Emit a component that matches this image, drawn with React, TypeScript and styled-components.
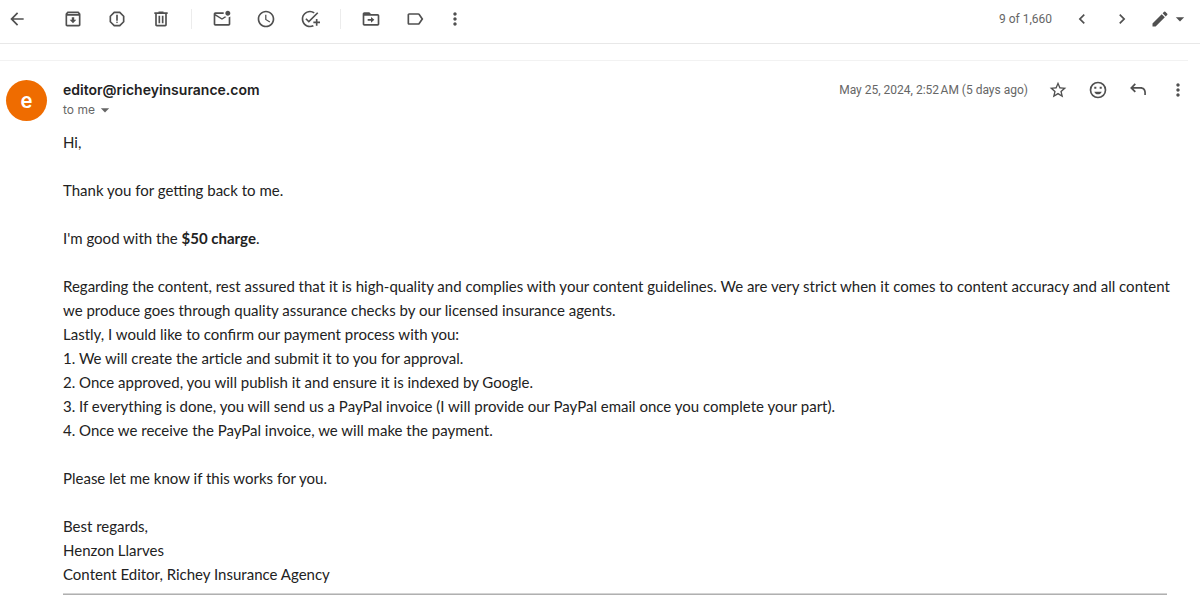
import React from 'react';
import styled, { createGlobalStyle, css } from 'styled-components';
import {
  MdAccessTime,
  MdArrowBack,
  MdArrowDropDown,
  MdChevronLeft,
  MdChevronRight,
  MdEdit,
  MdMoreVert,
  MdOutlineAddTask,
  MdOutlineArchive,
  MdOutlineLabel,
  MdOutlineReport,
  MdStarBorder,
} from 'react-icons/md';

const GlobalStyle = createGlobalStyle`
  * { box-sizing: border-box; }
  body {
    margin: 0;
    background: #fff;
    color: #222;
    font-family: Inter, "Liberation Sans", sans-serif;
  }
`;

const Toolbar = styled.header`
  display: flex;
  align-items: center;
  justify-content: space-between;
  height: 44px;
  padding: 0 2px 6px 0;
  border-bottom: 1px solid #e8e8e8;
`;

const ToolGroup = styled.div`
  display: flex;
  align-items: center;
`;

const IconButton = styled.button<{ $width?: number; $spaced?: boolean }>`
  display: flex;
  flex: none;
  align-items: center;
  justify-content: center;
  width: ${({ $width = 44 }) => $width}px;
  height: 32px;
  padding: 0;
  border: 0;
  background: none;
  color: #505050;
  cursor: pointer;
  ${({ $spaced }) => $spaced && css`margin-right: 17px;`}
`;

const Separator = styled.span`
  width: 1px;
  height: 20px;
  margin: 0 8px;
  background: #ececec;
`;

const Counter = styled.span`
  margin-right: 10px;
  color: #666;
  font: 12px/20px Roboto, sans-serif;
`;

const Message = styled.main`
  margin: 16px 12px 0 0;
  border-top: 1px solid #f2f2f2;
`;

const MessageHeader = styled.div`
  display: flex;
  align-items: flex-start;
  margin-right: -12px;
  padding: 19px 2px 0 6px;
`;

const Avatar = styled.div`
  display: flex;
  flex: none;
  align-items: center;
  justify-content: center;
  width: 41px;
  height: 41px;
  margin-right: 16px;
  border-radius: 50%;
  background: #ef6c00;
  color: #fff;
  font: 500 22px/22px Roboto, sans-serif;
`;

const Sender = styled.div`
  flex: 1;
`;

const SenderName = styled.h1`
  margin: 0;
  color: #222;
  font-size: 14px;
  font-weight: 600;
  line-height: 20px;
`;

const Recipient = styled.button`
  display: flex;
  align-items: center;
  padding: 0;
  border: 0;
  background: none;
  color: #666;
  font-family: inherit;
  font-size: 12px;
  line-height: 20px;
  cursor: pointer;
`;

const Meta = styled.div`
  display: flex;
  align-items: center;
  height: 20px;
`;

const SentDate = styled.time`
  margin-right: 10px;
  color: #666;
  font: 12px/20px Roboto, sans-serif;
`;

const Body = styled.article`
  padding: 9px 16px 0 63px;
  font-family: Lato, sans-serif;
  font-size: 15px;
  line-height: 24px;
`;

const Paragraph = styled.p<{ $tight?: boolean }>`
  margin: 0 0 ${({ $tight }) => ($tight ? 0 : 24)}px;
`;

const Rule = styled.hr`
  margin: 7px 5px 0 0;
  border: 0;
  border-top: 1px solid #d4d4d4;
  border-bottom: 1px solid #b0b0b0;
`;

const Glyph = ({ children }: { children: React.ReactNode }) => (
  <svg width="20" height="20" viewBox="0 0 24 24" fill="currentColor" aria-hidden="true">
    {children}
  </svg>
);

const TrashIcon = () => (
  <Glyph>
    <path d="M15 4V3H9v1H4v2h1v13c0 1.100.9 2 2 2h10c1.100 0 2-.9 2-2V6h1V4h-5zm2 15H7V6h10v13z" />
    <path d="M9 8h2v9H9zM13 8h2v9h-2z" />
  </Glyph>
);

const UnreadIcon = () => (
  <Glyph>
    <path d="M22 8.980V18c0 1.100-.9 2-2 2H4c-1.100 0-2-.9-2-2V6c0-1.100.9-2 2-2h10.100c-.1.320-.1.660-.1 1s0 .680.100 1H4l8 5 3.670-2.290c.470.430 1.020.760 1.630.980L12 13 4 8v10h16V9.900c.740-.15 1.420-.48 2-.92zM16 5c0 1.660 1.340 3 3 3s3-1.340 3-3-1.340-3-3-3-3 1.340-3 3z" />
  </Glyph>
);

const MoveIcon = () => (
  <Glyph>
    <path
      fillRule="evenodd"
      d="M4 4h6l2 2h8c1.100 0 2 .9 2 2v10c0 1.100-.9 2-2 2H4c-1.100 0-2-.9-2-2V6c0-1.100.9-2 2-2zm0 4v10h16V8H4z"
    />
    <path d="M8 12h4V9.500l4 3.500-4 3.500V14H8z" />
  </Glyph>
);

const SmileIcon = () => (
  <Glyph>
    <path
      fillRule="evenodd"
      d="M12 2a10 10 0 1 0 0 20 10 10 0 0 0 0-20zm0 2a8 8 0 1 1 0 16 8 8 0 0 1 0-16z"
    />
    <path d="M7.500 8h2.500v2.500H7.500zM14 8h2.500v2.500H14zM7.500 14h9c-.7 2-2.400 3.200-4.500 3.200S8.200 16 7.500 14z" />
  </Glyph>
);

const ReplyIcon = () => (
  <Glyph>
    <path d="M9.500 5.500 8 4 2.500 9.500 8 15l1.500-1.500-3-3H15c2.800 0 4.500 1.700 4.500 4.500v3h2v-3c0-4-2.500-6.500-6.500-6.500H6.500z" />
  </Glyph>
);

export default function App() {
  return (
    <>
      <GlobalStyle />
      <Toolbar>
        <ToolGroup>
          <IconButton $width={34} $spaced aria-label="Back"><MdArrowBack size={20} /></IconButton>
          <IconButton aria-label="Archive"><MdOutlineArchive size={20} /></IconButton>
          <IconButton aria-label="Report spam"><MdOutlineReport size={20} /></IconButton>
          <IconButton aria-label="Delete"><TrashIcon /></IconButton>
          <Separator />
          <IconButton aria-label="Mark as unread"><UnreadIcon /></IconButton>
          <IconButton aria-label="Snooze"><MdAccessTime size={20} /></IconButton>
          <IconButton aria-label="Add to tasks"><MdOutlineAddTask size={20} /></IconButton>
          <Separator />
          <IconButton aria-label="Move to"><MoveIcon /></IconButton>
          <IconButton aria-label="Labels"><MdOutlineLabel size={20} /></IconButton>
          <IconButton $width={36} aria-label="More"><MdMoreVert size={20} /></IconButton>
        </ToolGroup>
        <ToolGroup>
          <Counter>9 of 1,660</Counter>
          <IconButton $width={40} aria-label="Newer"><MdChevronLeft size={20} /></IconButton>
          <IconButton $width={40} aria-label="Older"><MdChevronRight size={20} /></IconButton>
          <IconButton $width={56} aria-label="Input tools">
            <MdEdit size={20} />
            <MdArrowDropDown size={20} />
          </IconButton>
        </ToolGroup>
      </Toolbar>
      <Message>
        <MessageHeader>
          <Avatar>e</Avatar>
          <Sender>
            <SenderName>editor@richeyinsurance.com</SenderName>
            <Recipient>to me <MdArrowDropDown size={20} /></Recipient>
          </Sender>
          <Meta>
            <SentDate dateTime="2024-05-25T02:52">May 25, 2024, 2:52{'\u202f'}AM (5 days ago)</SentDate>
            <IconButton $width={40} aria-label="Star"><MdStarBorder size={20} /></IconButton>
            <IconButton $width={40} aria-label="Add reaction"><SmileIcon /></IconButton>
            <IconButton $width={40} aria-label="Reply"><ReplyIcon /></IconButton>
            <IconButton $width={40} aria-label="More options"><MdMoreVert size={20} /></IconButton>
          </Meta>
        </MessageHeader>
        <Body>
          <Paragraph>Hi,</Paragraph>
          <Paragraph>Thank you for getting back to me.</Paragraph>
          <Paragraph>I'm good with the <strong>$50 charge</strong>.</Paragraph>
          <Paragraph $tight>
            Regarding the content, rest assured that it is high-quality and complies with your content
            guidelines. We are very strict when it comes to content accuracy and all content we produce
            goes through quality assurance checks by our licensed insurance agents.
          </Paragraph>
          <Paragraph $tight>Lastly, I would like to confirm our payment process with you:</Paragraph>
          <Paragraph $tight>1. We will create the article and submit it to you for approval.</Paragraph>
          <Paragraph $tight>2. Once approved, you will publish it and ensure it is indexed by Google.</Paragraph>
          <Paragraph $tight>
            3. If everything is done, you will send us a PayPal invoice (I will provide our PayPal email
            once you complete your part).
          </Paragraph>
          <Paragraph>4. Once we receive the PayPal invoice, we will make the payment.</Paragraph>
          <Paragraph>Please let me know if this works for you.</Paragraph>
          <Paragraph $tight>Best regards,</Paragraph>
          <Paragraph $tight>Henzon Llarves</Paragraph>
          <Paragraph $tight>Content Editor, Richey Insurance Agency</Paragraph>
          <Rule />
        </Body>
      </Message>
    </>
  );
}
